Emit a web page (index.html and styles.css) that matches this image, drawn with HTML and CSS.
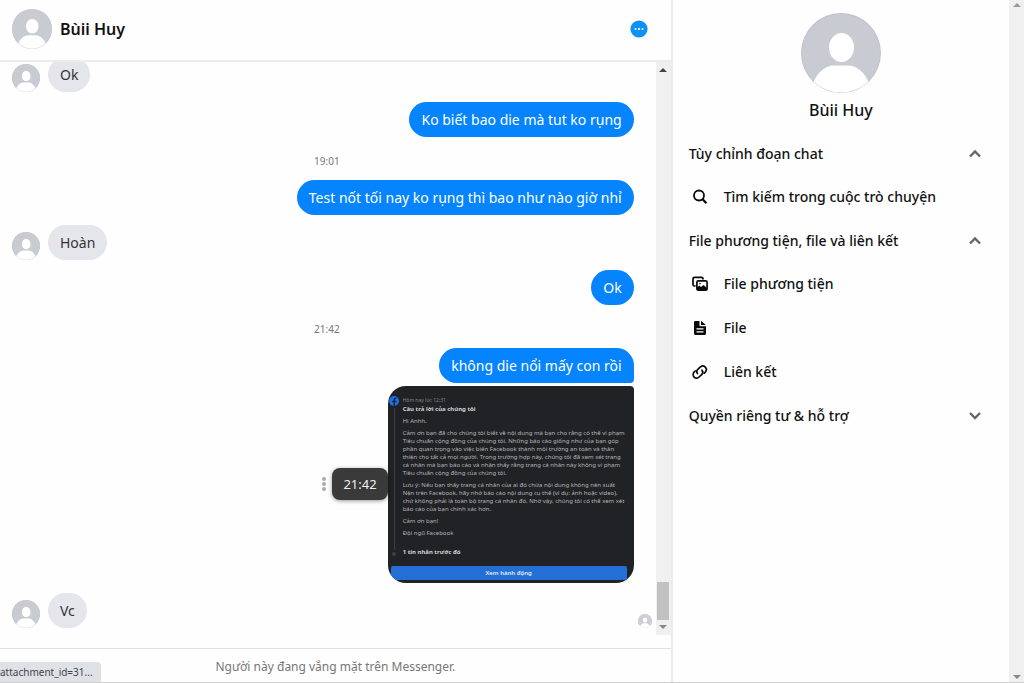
FILE: index.html
```html
<!DOCTYPE html>
<html lang="vi">
<head>
<meta charset="utf-8">
<meta name="viewport" content="width=device-width, initial-scale=1">
<title>Bùii Huy</title>
<link rel="stylesheet" href="styles.css">
</head>
<body>
<svg class="defs" aria-hidden="true">
  <defs>
    <clipPath id="disc"><circle cx="40" cy="40" r="39.6"/></clipPath>
    <symbol id="person" viewBox="0 0 80 80">
      <circle cx="40" cy="40" r="40" fill="#c0c1c7"/>
      <circle cx="40" cy="40" r="39" fill="#c9cbd2"/>
      <g clip-path="url(#disc)" fill="#fff">
        <ellipse cx="40.500" cy="34.500" rx="12.500" ry="14.500"/>
        <path d="M12 82V70C16 60 24 52.500 33 52.500H47C56 52.500 64 60 68 70V82Z"/>
      </g>
    </symbol>
    <symbol id="up" viewBox="0 0 14 14"><path d="M2 9.500l5-5 5 5" fill="none" stroke="#666" stroke-width="2.400"/></symbol>
    <symbol id="down" viewBox="0 0 14 14"><path d="M2 4l5 5 5-5" fill="none" stroke="#666" stroke-width="2.400"/></symbol>
  </defs>
</svg>
<div class="app">
  <main class="chat">
    <header class="chat-head">
      <svg class="avatar-md" aria-hidden="true"><use href="#person"/></svg>
      <h1 class="chat-name">Bùii Huy</h1>
      <button class="more" type="button" aria-label="Thông tin">
        <svg viewBox="0 0 18 18"><circle cx="9" cy="9" r="8.600" fill="#0a92f8"/><g fill="#fff"><circle cx="5.500" cy="9" r="1.100"/><circle cx="9" cy="9" r="1.100"/><circle cx="12.500" cy="9" r="1.100"/></g></svg>
      </button>
    </header>
    <div class="pane">
      <div class="messages">
        <div class="row"><svg class="avatar-sm" aria-hidden="true"><use href="#person"/></svg><p class="bubble">Ok</p></div>
        <div class="row mine"><p class="bubble">Ko biết bao die mà tut ko rụng</p></div>
        <time class="stamp">19:01</time>
        <div class="row mine"><p class="bubble">Test nốt tối nay ko rụng thì bao như nào giờ nhỉ</p></div>
        <div class="row"><svg class="avatar-sm" aria-hidden="true"><use href="#person"/></svg><p class="bubble">Hoàn</p></div>
        <div class="row mine"><p class="bubble">Ok</p></div>
        <time class="stamp">21:42</time>
        <div class="row mine group"><p class="bubble first">không die nổi mấy con rồi</p></div>
        <div class="row mine">
          <div class="attachment">
            <button class="menu" type="button" aria-label="Xem thêm"><i></i><i></i><i></i></button>
            <span class="tooltip">21:42</span>
            <article class="shot">
              <div class="rail">
                <svg class="fb" viewBox="0 0 10 10" aria-hidden="true"><circle cx="5" cy="5" r="5" fill="#1b6fe0"/><path d="M4.6 10V6.2H3.3V4.8h1.3V3.7c0-1.3.8-1.9 1.9-1.9h.8V3h-.6c-.6 0-.8.3-.8.8v1h1.4L7.1 6.2H5.9V10Z" fill="#202225"/></svg>
                <span class="line"></span>
                <span class="knot"></span>
              </div>
              <div class="shot-body">
                <p class="shot-time">Hôm nay lúc 12:31</p>
                <h2 class="shot-title">Câu trả lời của chúng tôi</h2>
                <p>Hi Anhh,</p>
                <p>Cảm ơn bạn đã cho chúng tôi biết về nội dung mà bạn cho rằng có thể vi phạm<br>Tiêu chuẩn cộng đồng của chúng tôi. Những báo cáo giống như của bạn góp<br>phần quan trọng vào việc biến Facebook thành môi trường an toàn và thân<br>thiện cho tất cả mọi người. Trong trường hợp này, chúng tôi đã xem xét trang<br>cá nhân mà bạn báo cáo và nhận thấy rằng trang cá nhân này không vi phạm<br>Tiêu chuẩn cộng đồng của chúng tôi.</p>
                <p>Lưu ý: Nếu bạn thấy trang cá nhân của ai đó chứa nội dung không nên xuất<br>Nện trên Facebook, hãy nhớ báo cáo nội dung cụ thể (ví dụ: ảnh hoặc video),<br>chứ không phải là toàn bộ trang cá nhân đó. Nhờ vậy, chúng tôi có thể xem xét<br>báo cáo của bạn chính xác hơn.</p>
                <p>Cảm ơn bạn!</p>
                <p>Đội ngũ Facebook</p>
                <h3 class="shot-prev">1 tin nhắn trước đó</h3>
              </div>
              <button class="shot-action" type="button">Xem hành động</button>
            </article>
          </div>
        </div>
        <div class="row">
          <svg class="avatar-sm" aria-hidden="true"><use href="#person"/></svg><p class="bubble">Vc</p>
          <svg class="seen" aria-hidden="true"><use href="#person"/></svg>
        </div>
      </div>
      <div class="scrollbar">
        <svg class="arrow" viewBox="0 0 8 4" aria-hidden="true"><path d="M4 0l4 4H0Z" fill="#444"/></svg>
        <span class="thumb"></span>
        <svg class="arrow" viewBox="0 0 8 4" aria-hidden="true"><path d="M0 0h8L4 4Z" fill="#888"/></svg>
      </div>
    </div>
    <footer class="notice">Người này đang vắng mặt trên Messenger.</footer>
  </main>
  <aside class="info">
    <div class="profile">
      <svg class="avatar-lg" aria-hidden="true"><use href="#person"/></svg>
      <h2 class="profile-name">Bùii Huy</h2>
    </div>
    <button class="section" type="button">Tùy chỉnh đoạn chat<svg class="chevron"><use href="#up"/></svg></button>
    <button class="item" type="button">
      <svg class="icon" viewBox="0 0 16 16"><circle cx="7" cy="6.500" r="5" fill="none" stroke="#080808" stroke-width="1.800"/><path d="M10.400 10l4 4.200" stroke="#080808" stroke-width="2.300"/></svg>Tìm kiếm trong cuộc trò chuyện</button>
    <button class="section" type="button">File phương tiện, file và liên kết<svg class="chevron"><use href="#up"/></svg></button>
    <button class="item" type="button">
      <svg class="icon" viewBox="0 0 16 16"><path d="M3.600 10H2.400Q1 10 1 8.600V2.800Q1 1.400 2.400 1.400H9.600Q11 1.400 11 2.800V3.600" fill="none" stroke="#080808" stroke-width="1.700"/><rect x="4.900" y="4.900" width="10.200" height="9.300" rx="1.500" fill="#fff" stroke="#080808" stroke-width="1.700"/><path d="M5 14v-2.500l2.300-2 1.700 1.400 2.400-1.800L15 12v2Z" fill="#080808"/><circle cx="8" cy="7.600" r=".8" fill="#080808"/></svg>File phương tiện</button>
    <button class="item" type="button">
      <svg class="icon" viewBox="0 0 16 16"><path d="M3.400 1H7.500v4.300q0 1 1 1h5.500V13.600q0 1.400-1.400 1.400H3.400Q2 15 2 13.600V2.400Q2 1 3.400 1Z" fill="#080808"/><path d="M9 .8L13.800 5H9Z" fill="#080808"/><path d="M4.500 8.800H11.500M4.500 11.800H11.500" stroke="#fff" stroke-width="1.300"/></svg>File</button>
    <button class="item" type="button">
      <svg class="icon" viewBox="0 0 16 16"><g fill="none" stroke="#080808" stroke-width="1.700" stroke-linecap="round"><path d="M5.500 9.500A3.200 3.200 0 0 1 6 5.200L8.500 2.800A3.600 3.600 0 0 1 13.600 7.800L12.300 9.100"/><path d="M10 6.200A3.200 3.200 0 0 1 9.600 10.600L7.100 13A3.500 3.500 0 0 1 2.100 8.100L3.200 7"/></g></svg>Liên kết</button>
    <button class="section" type="button">Quyền riêng tư &amp; hỗ trợ<svg class="chevron"><use href="#down"/></svg></button>
  </aside>
  <div class="scrollbar page-bar">
    <svg class="arrow" viewBox="0 0 8 4" aria-hidden="true"><path d="M4 0l4 4H0Z" fill="#999"/></svg>
    <svg class="arrow" viewBox="0 0 8 4" aria-hidden="true"><path d="M0 0h8L4 4Z" fill="#888"/></svg>
  </div>
</div>
<div class="status">attachment_id=31...</div>
</body>
</html>
```
FILE: styles.css
```css
* { box-sizing: border-box; }
body {
  margin: 0;
  background: #fefefe;
  color: #111;
  font: 14px/20px "Noto Sans", "Open Sans", sans-serif;
}
h1, h2, h3, p { margin: 0; }
button {
  border: 0;
  padding: 0;
  background: none;
  color: inherit;
  font: inherit;
  text-align: left;
}
svg { display: block; flex: none; }
.defs { position: absolute; width: 0; height: 0; }

.app {
  display: grid;
  grid-template-columns: minmax(0, 2fr) minmax(0, 1fr) 15px;
  height: 100vh;
  border-bottom: 1px solid #d0d0d0;
}
.chat {
  display: flex;
  flex-direction: column;
  min-height: 0;
  border-right: 2px solid #ebebeb;
}
.chat-head {
  display: flex;
  align-items: center;
  gap: 8px;
  height: 62px;
  padding: 0 23px 2px 12px;
  border-bottom: 2px solid #ececee;
  flex: none;
}
.avatar-md { width: 40px; height: 40px; }
.avatar-sm { width: 28px; height: 28px; }
.avatar-lg { width: 80px; height: 80px; }
.chat-name { flex: 1; font-size: 16px; font-weight: 600; line-height: 24px; }
.more svg { width: 18px; height: 18px; }

.pane { flex: 1; display: flex; min-height: 0; margin-bottom: 13px; }
.messages {
  flex: 1;
  display: flex;
  flex-direction: column;
  justify-content: flex-end;
  overflow: hidden;
  padding: 0 22px 7px 12px;
}
.row {
  position: relative;
  display: flex;
  align-items: flex-end;
  gap: 8px;
  flex: none;
  margin-top: 10px;
}
.mine { justify-content: flex-end; }
.bubble {
  padding: 8px 12px 7px;
  border-radius: 18px;
  background: #e5e6eb;
  color: #333;
  white-space: nowrap;
}
.mine .bubble { background: #0584fe; color: #fff; }
.mine .first { border-bottom-right-radius: 4px; }
.stamp {
  flex: none;
  height: 33px;
  color: #777;
  font-size: 10px;
  line-height: 48px;
  text-align: center;
  padding-left: 8px;
}
.group + .row { margin-top: 3px; }
.seen { position: absolute; right: -18px; bottom: 0; width: 14px; height: 14px; opacity: .9; }

.attachment { position: relative; }
.menu {
  position: absolute;
  right: calc(100% + 62px);
  top: 91px;
  display: grid;
  gap: 1px;
}
.menu i { width: 4px; height: 4px; border-radius: 50%; background: #aaa; }
.tooltip {
  position: absolute;
  right: 100%;
  top: 82px;
  padding: 6px 11px;
  border-radius: 8px;
  background: #3a3a3b;
  box-shadow: 0 1px 4px #0006;
  color: #eee;
  font-size: 13px;
}
.shot {
  display: grid;
  grid-template-columns: 9px 1fr;
  column-gap: 4px;
  width: 246px;
  padding: 10px 7px 3px 2px;
  border-radius: 18px 4px 18px 18px;
  background: #202225;
  color: #b4b5b8;
  font-size: 6px;
  line-height: 8px;
  white-space: nowrap;
  overflow: hidden;
}
.rail { display: flex; flex-direction: column; align-items: center; gap: 2px; padding-bottom: 10px; }
.fb { width: 10px; height: 10px; }
.line { flex: 1; width: 1px; background: #3d3f43; }
.knot { width: 4px; height: 4px; border-radius: 50%; background: #3d3f43; }
.shot-body { display: grid; gap: 4px; }
.shot-time { color: #85878b; font-size: 5px; }
.shot-title { color: #d4d5d8; font-size: 6px; margin-top: -3px; }
.shot-prev { margin: 7px 0 10px; color: #d4d5d8; font-size: 6px; }
.shot-action {
  grid-column: 1 / -1;
  margin-left: 1px;
  height: 14px;
  border-radius: 2px;
  background: #236fd6;
  color: #e4edfa;
  font-weight: 600;
  text-align: center;
}

.scrollbar {
  display: flex;
  flex-direction: column;
  align-items: center;
  width: 15px;
  padding: 6px 1px;
  background: #f0f0f0;
}
.arrow { width: 8px; height: 4px; }
.thumb { width: 12px; height: 38px; margin: auto 0 5px; background: #c1c1c1; }
.page-bar { justify-content: space-between; padding: 3px 0; }

.notice {
  flex: none;
  height: 34px;
  border-top: 1px solid #e0e1e3;
  color: #777;
  font-size: 12px;
  line-height: 36px;
  text-align: center;
}
.status {
  position: fixed;
  left: 0;
  bottom: 1px;
  padding: 2px 8px 1px 0;
  border-top-right-radius: 4px;
  background: #dee1e6;
  color: #444;
  font-size: 10px;
  line-height: 17px;
}

.info { padding: 13px 0 0 16px; display: flex; flex-direction: column; }
.profile { display: grid; justify-items: center; gap: 5px; padding-right: 16px; margin-bottom: 10px; }
.profile-name { font-size: 16px; font-weight: 500; line-height: 24px; }
.section, .item { display: flex; align-items: center; font-weight: 500; white-space: nowrap; }
.section { justify-content: space-between; height: 43px; padding-right: 27px; }
.item { gap: 16px; height: 44px; padding-left: 3px; }
.icon { width: 16px; height: 16px; }
.chevron { width: 14px; height: 14px; }
```
